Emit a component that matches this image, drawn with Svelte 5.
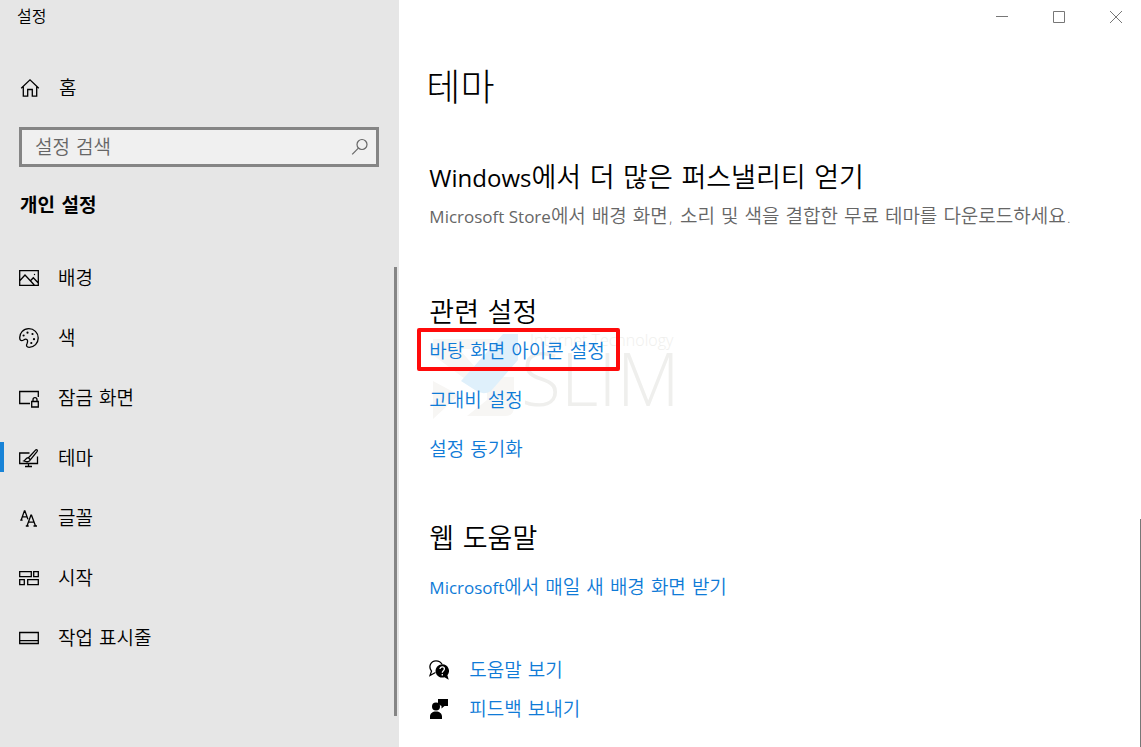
<script>
  const items = [
    { id: 'background', label: '배경' },
    { id: 'color', label: '색' },
    { id: 'lock', label: '잠금 화면' },
    { id: 'theme', label: '테마', active: true },
    { id: 'font', label: '글꼴' },
    { id: 'start', label: '시작' },
    { id: 'taskbar', label: '작업 표시줄' }
  ];
</script>

<div class="window">
  <aside>
    <div class="title">설정</div>
    <a class="row home" href="#home">
      <svg class="icon" viewBox="0 0 20 20" aria-hidden="true">
        <path d="M1.2 10.2 10 1.8l8.8 8.4M3.3 8.8v9.4h4.4v-6.7h4.6v6.7h4.4V8.8" />
      </svg>
      <span>홈</span>
    </a>
    <label class="search">
      <input type="text" placeholder="설정 검색" aria-label="설정 검색" />
      <svg viewBox="0 0 18 18" aria-hidden="true">
        <circle cx="11" cy="6.5" r="5" /><path d="M7.4 10.2 1.2 16.4" />
      </svg>
    </label>
    <h2 class="section">개인 설정</h2>
    <nav>
      {#each items as item}
        <a class="row" class:active={item.active} href={'#' + item.id}>
          <svg class="icon" viewBox="0 0 20 20" aria-hidden="true">
            {#if item.id === 'background'}
              <path d="M.7 2.700h18.600v14.600H.7zM1 12.500l5-5.500 9.300 10M11.500 12.700l2.800-3 4.800 5" />
              <circle class="solid" cx="15.500" cy="6.500" r=".7" />
            {:else if item.id === 'color'}
              <path d="M.8 10.500C.2 5.300 4.300.7 9.800.7c5.200 0 9.400 4 9.400 9.200 0 5.400-4 9.400-9 9.400-2.600 0-3.200-1.700-2.200-3.600 1-2.200.8-4.500-1.200-4.500-1.800 0-2.500 1.400-4 1.400-1.100 0-1.900-.8-2-2.100Z" />
              <g class="solid">
                <circle cx="4.600" cy="7.500" r="1.100" /><circle cx="8.500" cy="4.700" r="1.100" />
                <circle cx="13.500" cy="6" r="1.100" /><circle cx="15" cy="11.200" r="1.100" />
                <circle cx="12.300" cy="15" r="1.100" />
              </g>
            {:else if item.id === 'lock'}
              <path d="M11 15.500H.7v-12h18.600V9M12.700 13.500h6.600v5.500h-6.600zM14 13.500v-1.800a2 2 0 0 1 4 0v1.800" />
            {:else if item.id === 'theme'}
              <path d="M10.500 5H.7v10.500h17.800V8.500M9.500 15.500v3M6 18.500h7M9.500 9.800 16.500 2.100c1.300-1.100 2.500.2 1.500 1.500L11.300 11.800M9.500 9.800c-2.700-.5-2.300 2.200-4.700 3.200 3 1.300 6.300.8 6.500-1.200Z" />
            {:else if item.id === 'font'}
              <path d="M2.200 12 5.400 2.800h.5l3 8.500M3.500 8.800h4.400M1.200 12.100h2.400M8 18 11.900 7.200h.6l4 10.800M9.400 14.200h5.700M6.800 18h2.900M14.500 18H18" />
            {:else if item.id === 'start'}
              <path d="M.7 3.700h11.600v5H.7zM14.700 3.700h4.600v5h-4.600zM.7 11.700h4.600v5H.7zM8.700 11.700h10.600v5H8.700z" />
            {:else}
              <path d="M.7 4.500h18.600v11H.7zM.7 12.700h18.600" />
            {/if}
          </svg>
          <span>{item.label}</span>
        </a>
      {/each}
    </nav>
  </aside>

  <main>
    <div class="controls">
      <button aria-label="최소화"><svg viewBox="0 0 12 12"><path d="M0 5.500h12" /></svg></button>
      <button aria-label="최대화"><svg viewBox="0 0 12 12"><path d="M.5.5h11v11H.5z" /></svg></button>
      <button aria-label="닫기"><svg viewBox="0 0 12 12"><path d="m0 0 12 12M12 0 0 12" /></svg></button>
    </div>

    <h1>테마</h1>

    <section class="store">
      <h2><span class="latin">Windows</span>에서 더 많은 퍼스낼리티 얻기</h2>
      <p><span class="latin">Microsoft Store</span>에서 배경 화면, 소리 및 색을 결합한 무료 테마를 다운로드하세요.</p>
    </section>

    <section class="related">
      <svg class="watermark" viewBox="0 0 260 90" aria-hidden="true">
        <path class="pale" d="M4 8h62L52 18H30l16 18-10 12L4 24zM4 50l26 14-26 24zM58 46h27v30q0 9-9 9H38l20-16z" />
        <path class="sky" d="M74 3h15v26L62 60q-8 5-16-1L32 50z" />
        <text class="small" x="101" y="15">Internet Technology</text>
        <text class="large" x="92" y="75">SLIM</text>
      </svg>
      <h2>관련 설정</h2>
      <ul>
        <li><a class="marked" href="#icons">바탕 화면 아이콘 설정</a></li>
        <li><a href="#contrast">고대비 설정</a></li>
        <li><a href="#sync">설정 동기화</a></li>
      </ul>
    </section>

    <section class="web">
      <h2>웹 도움말</h2>
      <a href="#daily"><span class="latin">Microsoft</span>에서 매일 새 배경 화면 받기</a>
    </section>

    <footer>
      <a href="#help">
        <svg class="icon" viewBox="0 0 20 20" aria-hidden="true">
          <path d="M6.500 12.500 1 15.500l1.500-4.300C-1 6.500 1.800.8 7 .8c3 0 5 1.500 6 3.500" />
          <path class="solid" d="M13 4.200a6.700 6.700 0 1 0 2.500 13l4.200 2.500-1.300-4.500A6.700 6.700 0 0 0 13 4.200Z" />
          <path class="mark" d="M11 9c0-2.800 4.400-2.600 4.400 0 0 1.700-2.100 1.700-2.100 3.700M13.300 14v1.500" />
        </svg>
        <span>도움말 보기</span>
      </a>
      <a href="#feedback">
        <svg class="icon" viewBox="0 0 20 20" aria-hidden="true">
          <path class="solid" d="M1 20v-2.500C1 14.500 3.500 12.500 7 12.500s6 2 6 5V20zM9 0h10v7h-3.500L12.500 9.500V7L9 5z" />
          <circle class="solid" cx="7" cy="7.500" r="4" />
        </svg>
        <span>피드백 보내기</span>
      </a>
    </footer>
  </main>
</div>

<style>
  :global(body) {
    margin: 0;
  }
  .window {
    display: flex;
    min-height: 100vh;
    overflow: hidden;
    background: #fff;
    color: #000;
    font: 350 19px/24px "DejaVu Sans", "Noto Sans CJK KR", sans-serif;
  }
  h1, h2, p, ul {
    margin: 0;
    padding: 0;
    font-weight: 350;
  }
  a {
    text-decoration: none;
    color: #0f7bd7;
  }
  aside {
    flex: 0 0 35%;
    box-sizing: border-box;
    background: #e6e6e6;
  }
  .title {
    padding: 5px 17px 0;
    font-size: 16px;
  }
  .row {
    position: relative;
    display: flex;
    align-items: center;
    gap: 19px;
    height: 60px;
    padding-left: 19px;
    color: #000;
  }
  .home {
    margin-top: 29px;
    padding-left: 20px;
  }
  .icon {
    flex: none;
    width: 20px;
    height: 20px;
    fill: none;
    stroke: #000;
    stroke-width: 1.3;
  }
  .solid {
    fill: #000;
    stroke: none;
  }
  .search {
    display: flex;
    align-items: center;
    box-sizing: border-box;
    height: 40px;
    margin: 9px 20px 0 19px;
    padding: 0 7px 0 13px;
    border: 3px solid #858585;
    background: #f0f0f0;
  }
  .search input {
    flex: 1;
    min-width: 0;
    padding: 0;
    border: 0;
    outline: 0;
    background: none;
    font: inherit;
  }
  .search input::placeholder {
    color: #666;
    opacity: 1;
  }
  .search svg {
    width: 18px;
    height: 18px;
    fill: none;
    stroke: #666;
    stroke-width: 1.2;
  }
  .section {
    margin: 26px 20px 31px;
    font-size: 19px;
    font-weight: 700;
  }
  nav {
    position: relative;
  }
  nav::after {
    content: "";
    position: absolute;
    top: 19px;
    right: 2px;
    bottom: -48px;
    width: 3px;
    background: #858585;
  }
  .active::before {
    content: "";
    position: absolute;
    top: 14px;
    left: 0;
    width: 4px;
    height: 30px;
    background: #1883d7;
  }
  main {
    position: relative;
    flex: 1;
    min-width: 0;
    padding-left: 30px;
  }
  main::after {
    content: "";
    position: absolute;
    top: 519px;
    right: 0;
    bottom: 0;
    width: 1px;
    background: #777;
  }
  .controls {
    display: flex;
    justify-content: flex-end;
    height: 34px;
    margin-right: -3px;
  }
  .controls button {
    width: 57px;
    padding: 0;
    border: 0;
    background: none;
  }
  .controls svg {
    display: block;
    width: 12px;
    height: 12px;
    margin: auto;
    fill: none;
    stroke: #777;
  }
  h1 {
    margin: 31px 0 0 -3px;
    font-size: 37px;
    line-height: 48px;
    font-weight: 300;
  }
  main h2 {
    font-size: 27px;
    line-height: 36px;
  }
  .latin {
    font-family: "Open Sans", sans-serif;
    font-size: 17px;
    line-height: 1;
    font-weight: 400;
  }
  h2 .latin {
    font-size: 24px;
  }
  .store {
    margin-top: 47px;
  }
  .store p {
    margin-top: 8px;
    color: #666;
  }
  .related {
    position: relative;
    margin-top: 67px;
  }
  .related h2, .related ul {
    position: relative;
  }
  ul {
    display: grid;
    justify-items: start;
    gap: 25px;
    margin-top: 8px;
    list-style: none;
  }
  .marked {
    position: relative;
    display: block;
  }
  .marked::after {
    content: "";
    position: absolute;
    inset: -11px -15px -8px -12px;
    border: 4px solid #ff0b0b;
    border-radius: 2px;
  }
  .watermark {
    position: absolute;
    top: 36px;
    left: 0;
    width: 260px;
    height: 90px;
    overflow: visible;
  }
  .pale {
    fill: #f7f6f4;
  }
  .sky {
    fill: #dff0fb;
  }
  .watermark text {
    fill: #efefed;
    font-family: "Open Sans", sans-serif;
    font-weight: 300;
  }
  .small {
    font-size: 16px;
  }
  .large {
    font-size: 73px;
  }
  .web {
    margin-top: 60px;
  }
  .web a {
    display: block;
    margin-top: 18px;
  }
  footer {
    display: grid;
    justify-items: start;
    gap: 15px;
    margin-top: 59px;
  }
  footer a {
    display: flex;
    align-items: center;
    gap: 20px;
  }
  .mark {
    stroke: #fff;
  }
</style>
